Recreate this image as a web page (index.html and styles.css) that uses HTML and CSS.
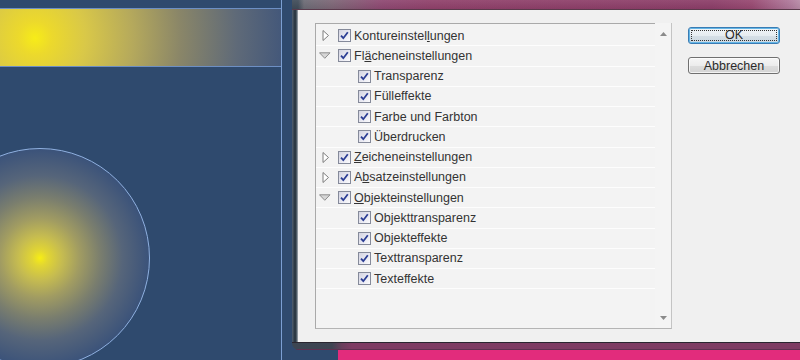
FILE: index.html
```html
<!DOCTYPE html>
<html lang="de">
<head>
<meta charset="utf-8">
<title>Optionen</title>
<link rel="stylesheet" href="styles.css">
</head>
<body>
<div class="screen">
  <div class="canvas">
    <div class="strip"></div>
    <div class="vline"></div>
    <div class="orb"></div>
  </div>
  <div class="side">
    <div class="win">
      <div class="title"></div>
      <div class="mid">
        <div class="lframe"></div>
        <div class="body">
          <div class="listbox">
            <div class="list">
              <div class="row lv1"><span class="exp closed"><svg width="8" height="11" viewBox="0 0 8 11"><polygon points="1,0.5 6.5,5.5 1,10.5" fill="#fff" stroke="#7c7c7c"/></svg></span><span class="cb"><svg width="11" height="11" viewBox="0 0 11 11"><path d="M2 5.6 L4.3 8.2 L8.8 2.2" fill="none" stroke="#2b3d94" stroke-width="1.8"/></svg></span><span class="lbl">Kontureinstel<u>l</u>ungen</span></div>
              <div class="row lv1"><span class="exp open"><svg width="12" height="7" viewBox="0 0 12 7"><polygon points="0.5,0.8 11,0.8 5.8,6.3" fill="#d6d6d6" stroke="#8e8e8e"/></svg></span><span class="cb"><svg width="11" height="11" viewBox="0 0 11 11"><path d="M2 5.6 L4.3 8.2 L8.8 2.2" fill="none" stroke="#2b3d94" stroke-width="1.8"/></svg></span><span class="lbl">Fl<u>ä</u>cheneinstellungen</span></div>
              <div class="row lv2"><span class="cb"><svg width="11" height="11" viewBox="0 0 11 11"><path d="M2 5.6 L4.3 8.2 L8.8 2.2" fill="none" stroke="#2b3d94" stroke-width="1.8"/></svg></span><span class="lbl">Transparenz</span></div>
              <div class="row lv2"><span class="cb"><svg width="11" height="11" viewBox="0 0 11 11"><path d="M2 5.6 L4.3 8.2 L8.8 2.2" fill="none" stroke="#2b3d94" stroke-width="1.8"/></svg></span><span class="lbl">Fülleffekte</span></div>
              <div class="row lv2"><span class="cb"><svg width="11" height="11" viewBox="0 0 11 11"><path d="M2 5.6 L4.3 8.2 L8.8 2.2" fill="none" stroke="#2b3d94" stroke-width="1.8"/></svg></span><span class="lbl">Farbe und Farbton</span></div>
              <div class="row lv2"><span class="cb"><svg width="11" height="11" viewBox="0 0 11 11"><path d="M2 5.6 L4.3 8.2 L8.8 2.2" fill="none" stroke="#2b3d94" stroke-width="1.8"/></svg></span><span class="lbl">Überdrucken</span></div>
              <div class="row lv1"><span class="exp closed"><svg width="8" height="11" viewBox="0 0 8 11"><polygon points="1,0.5 6.5,5.5 1,10.5" fill="#fff" stroke="#7c7c7c"/></svg></span><span class="cb"><svg width="11" height="11" viewBox="0 0 11 11"><path d="M2 5.6 L4.3 8.2 L8.8 2.2" fill="none" stroke="#2b3d94" stroke-width="1.8"/></svg></span><span class="lbl"><u>Z</u>eicheneinstellungen</span></div>
              <div class="row lv1"><span class="exp closed"><svg width="8" height="11" viewBox="0 0 8 11"><polygon points="1,0.5 6.5,5.5 1,10.5" fill="#fff" stroke="#7c7c7c"/></svg></span><span class="cb"><svg width="11" height="11" viewBox="0 0 11 11"><path d="M2 5.6 L4.3 8.2 L8.8 2.2" fill="none" stroke="#2b3d94" stroke-width="1.8"/></svg></span><span class="lbl">A<u>b</u>satzeinstellungen</span></div>
              <div class="row lv1"><span class="exp open"><svg width="12" height="7" viewBox="0 0 12 7"><polygon points="0.5,0.8 11,0.8 5.8,6.3" fill="#d6d6d6" stroke="#8e8e8e"/></svg></span><span class="cb"><svg width="11" height="11" viewBox="0 0 11 11"><path d="M2 5.6 L4.3 8.2 L8.8 2.2" fill="none" stroke="#2b3d94" stroke-width="1.8"/></svg></span><span class="lbl"><u>O</u>bjekteinstellungen</span></div>
              <div class="row lv2"><span class="cb"><svg width="11" height="11" viewBox="0 0 11 11"><path d="M2 5.6 L4.3 8.2 L8.8 2.2" fill="none" stroke="#2b3d94" stroke-width="1.8"/></svg></span><span class="lbl">Objekttransparenz</span></div>
              <div class="row lv2"><span class="cb"><svg width="11" height="11" viewBox="0 0 11 11"><path d="M2 5.6 L4.3 8.2 L8.8 2.2" fill="none" stroke="#2b3d94" stroke-width="1.8"/></svg></span><span class="lbl">Objekteffekte</span></div>
              <div class="row lv2"><span class="cb"><svg width="11" height="11" viewBox="0 0 11 11"><path d="M2 5.6 L4.3 8.2 L8.8 2.2" fill="none" stroke="#2b3d94" stroke-width="1.8"/></svg></span><span class="lbl">Texttransparenz</span></div>
              <div class="row lv2"><span class="cb"><svg width="11" height="11" viewBox="0 0 11 11"><path d="M2 5.6 L4.3 8.2 L8.8 2.2" fill="none" stroke="#2b3d94" stroke-width="1.8"/></svg></span><span class="lbl">Texteffekte</span></div>
            </div>
            <div class="scroll">
              <svg class="arr" width="7" height="4" viewBox="0 0 7 4"><polygon points="0,4 7,4 3.5,0" fill="#8a8a8a"/></svg>
              <svg class="arr" width="7" height="4" viewBox="0 0 7 4"><polygon points="0,0 7,0 3.5,4" fill="#8a8a8a"/></svg>
            </div>
          </div>
          <div class="buttons">
            <button class="btn default"><span class="focus">OK</span></button>
            <button class="btn">Abbrechen</button>
          </div>
        </div>
      </div>
      <div class="bframe"></div>
    </div>
    <div class="below">
      <div class="gap"></div>
      <div class="pink"></div>
    </div>
  </div>
</div>
</body>
</html>
```

FILE: styles.css
```css
html, body {
  margin: 0;
  padding: 0;
}
body {
  width: 800px;
  height: 360px;
  overflow: hidden;
  background: #2f4a6e;
  font-family: "Liberation Sans", Arial, sans-serif;
}
.screen {
  display: flex;
  width: 800px;
  height: 360px;
}
.canvas {
  position: relative;
  width: 292px;
  flex: none;
  height: 360px;
  overflow: hidden;
  background: #2f4a6e;
}
.strip {
  position: absolute;
  left: 0;
  top: 8px;
  width: 281px;
  height: 57px;
  border-top: 1px solid #6d8fc4;
  border-bottom: 1px solid #6d8fc4;
  background: radial-gradient(circle 280px at 35px 29px, #f7ec18 0, #ecd92c 6%, #d9c848 18%, #b5a95c 35%, #8a8668 52%, #5f6a78 72%, #41567a 90%, #3a5178 100%);
}
.vline {
  position: absolute;
  left: 281px;
  top: 0;
  width: 1px;
  height: 360px;
  background: #7c9fd2;
}
.orb {
  position: absolute;
  left: -70px;
  top: 148px;
  width: 220px;
  height: 220px;
  border-radius: 50%;
  box-sizing: border-box;
  border: 1px solid #8fb0e0;
  background: radial-gradient(circle 110px at 50% 50%, #f7ee14 0, #e2d632 7%, #c6bc50 20%, #a19c62 36%, #7a7e6e 55%, #56657a 75%, #3a527a 100%);
}
.side {
  flex: 1;
  display: flex;
  flex-direction: column;
  min-width: 0;
}
.win {
  height: 350px;
  display: flex;
  flex-direction: column;
  border-bottom-left-radius: 7px;
  overflow: hidden;
}
.title {
  height: 10px;
  flex: none;
  background:
    linear-gradient(to bottom, rgba(255,255,255,0.08), rgba(0,0,0,0.05)),
    linear-gradient(to right, #3e4a57 0, #3e4a57 6px, #6b6a74 12px, #7b6474 40px, #8d4670 90px, #8f3f69 140px, #8b3c67 420px, #96466f 460px, #b07a9c 500px, #b88aa6 508px);
  box-shadow: inset 0 -1px 0 #5a3a4c;
}
.mid {
  flex: 1;
  display: flex;
  min-height: 0;
}
.lframe {
  width: 6px;
  flex: none;
  background: linear-gradient(to right, #4a5868 0, #4a5868 1px, #2c3944 2px, #2c3944 4px, #6e7a84 5px, #a7adb2 6px);
}
.body {
  flex: 1;
  background: #f0f0f0;
  display: flex;
  align-items: flex-start;
  gap: 16px;
  padding: 13px 0 0 17px;
}
.listbox {
  width: 357px;
  height: 306px;
  box-sizing: border-box;
  display: flex;
  border-left: 1px solid #a9a9a9;
  border-bottom: 1px solid #b4b4b4;
  border-right: 1px solid #c4c4c4;
  background: #f3f3f3;
}
.list {
  flex: 1;
  border-top: 1px solid #a9a9a9;
  padding-top: 2px;
}
.row {
  height: 20.25px;
  box-sizing: border-box;
  display: flex;
  align-items: center;
  border-bottom: 1px solid #fdfdfd;
  font-size: 12.5px;
  color: #333333;
}
.row.lv1 {
  padding-left: 1px;
}
.row.lv2 {
  padding-left: 41px;
}
.exp {
  width: 20px;
  height: 12px;
  flex: none;
  display: flex;
  align-items: center;
  justify-content: flex-start;
}
.exp.closed {
  padding-left: 5px;
  box-sizing: border-box;
}
.exp.open {
  padding-left: 2px;
  box-sizing: border-box;
}
.exp svg {
  display: block;
}
.cb {
  width: 13px;
  height: 13px;
  box-sizing: border-box;
  flex: none;
  margin-left: 1px;
  margin-right: 3px;
  border: 1px solid #858a9a;
  background: linear-gradient(135deg, #d3d4e2 0%, #e7e7f0 50%, #fbfbfd 100%);
  display: flex;
  align-items: center;
  justify-content: center;
}
.cb svg {
  display: block;
}
.lbl {
  white-space: nowrap;
  line-height: 14px;
}
.lbl u {
  text-decoration-thickness: 1px;
  text-underline-offset: 1px;
}
.scroll {
  width: 16px;
  flex: none;
  display: flex;
  flex-direction: column;
  justify-content: space-between;
  align-items: center;
  padding: 9px 0 8px;
  box-sizing: border-box;
  background: #f4f4f4;
}
.arr {
  display: block;
  margin-left: 1px;
}
.buttons {
  width: 92px;
  display: flex;
  flex-direction: column;
  gap: 13px;
  padding-top: 4px;
}
.btn {
  width: 92px;
  height: 17px;
  box-sizing: border-box;
  padding: 0;
  margin: 0;
  font-family: "Liberation Sans", Arial, sans-serif;
  font-size: 12.5px;
  color: #2a2a2a;
  line-height: 14px;
  border: 1px solid #707070;
  border-radius: 3px;
  background: linear-gradient(to bottom, #f6f6f6 0, #ececec 50%, #dddddd 51%, #d4d4d4 100%);
  box-shadow: inset 0 0 0 1px rgba(255,255,255,0.7);
  display: flex;
  align-items: center;
  justify-content: center;
}
.btn.default {
  border-color: #3a7cb4;
  box-shadow: inset 0 0 0 1px #64b6e6;
  background: linear-gradient(to bottom, #f2f5f8 0, #e6ecf1 50%, #d6dfe6 51%, #ccd8e1 100%);
}
.focus {
  display: flex;
  align-items: center;
  justify-content: center;
  width: 86px;
  height: 11px;
  border: 1px dotted #333;
  box-sizing: border-box;
  line-height: 11px;
}
.bframe {
  height: 8px;
  flex: none;
  background: linear-gradient(to right, #3c4652 0, #3e4452 40px, #6a3e5c 50px, #7e3b63 60px, #7e3c63 100%);
  box-shadow: inset 0 1px 0 #2a2630, inset 0 -1px 0 #5e3050;
}
.below {
  height: 10px;
  display: flex;
}
.gap {
  width: 46px;
  background: #2f4a6e;
}
.pink {
  flex: 1;
  background: #e22c7c;
}
```
